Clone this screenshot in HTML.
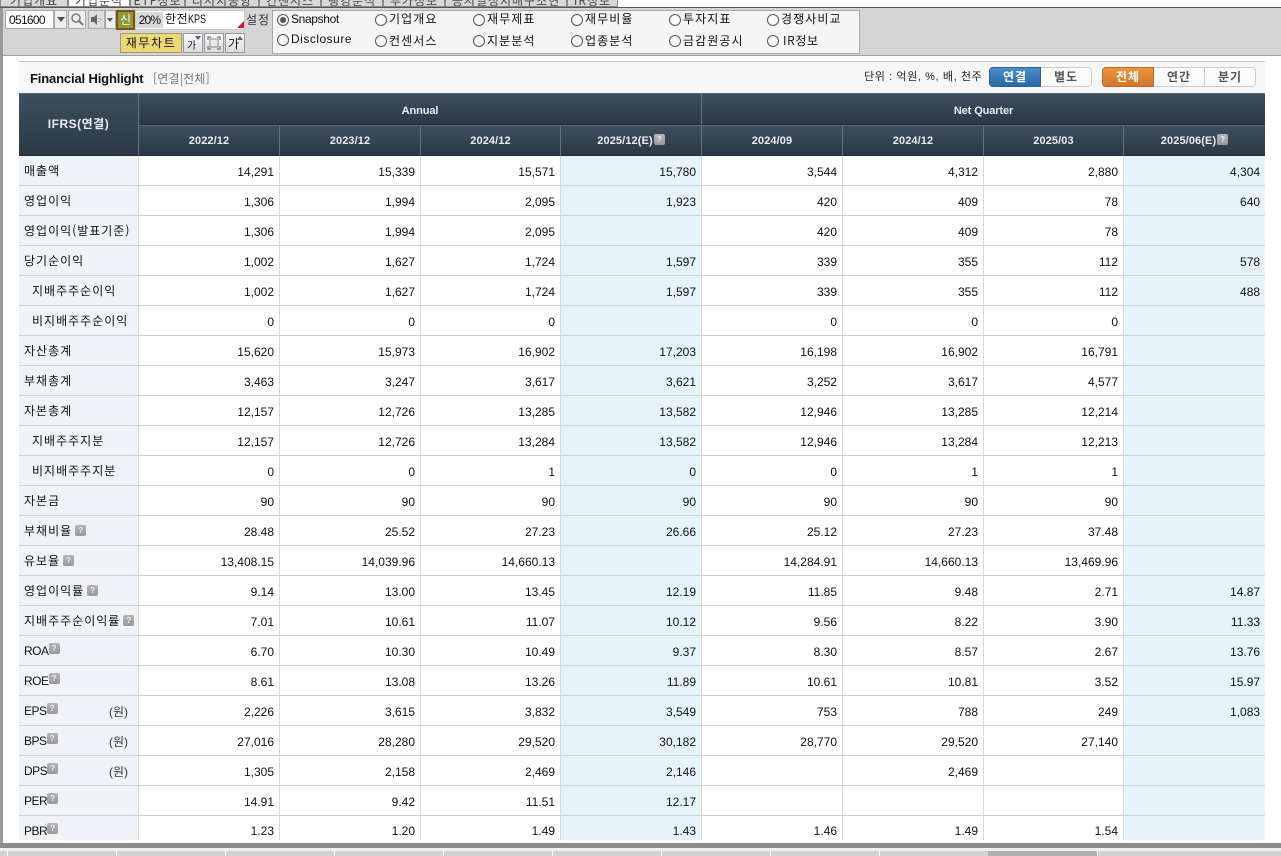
<!DOCTYPE html>
<html lang="ko"><head><meta charset="utf-8"><title>Financial Highlight</title>
<style>
html,body{margin:0;padding:0;background:#fff}
body{width:1281px;height:856px;position:relative;overflow:hidden;font-family:"Liberation Sans","Noto Sans CJK KR",sans-serif;font-size:12px;color:#111}
.a{position:absolute;white-space:nowrap}
.k{font-family:"Noto Sans CJK KR","Liberation Sans",sans-serif;letter-spacing:1px}
.tab{position:absolute;top:-8px;height:15px;line-height:15px;background:#d8d8d8;border:1px solid #888;box-sizing:border-box;text-align:center;font-size:12px;font-family:"Noto Sans CJK KR",sans-serif;overflow:hidden;letter-spacing:1px;color:#444}
.rd{position:absolute;width:12px;height:12px;border:1px solid #555;border-radius:50%;box-sizing:border-box;background:#f8f8f8}
.rt{position:absolute;font-family:"Noto Sans CJK KR",sans-serif;letter-spacing:1.1px;font-size:12px;line-height:14px;white-space:nowrap;color:#111}
.btn{position:absolute;top:33px;width:20px;height:20px;box-sizing:border-box;border:1px solid #999;background:linear-gradient(#fafafa,#ddd)}
table{position:absolute;left:19px;top:93px;border-collapse:separate;border-spacing:0;table-layout:fixed;width:1246px}
.wrap{position:absolute;left:0;top:0;width:1281px;height:840px;overflow:hidden}
th{background:linear-gradient(#3d4e5e,#2b3947);color:#e8edf2;font-size:11px;font-weight:bold;border-right:1px solid #65727f;border-bottom:1px solid #222d38;border-top:1px solid #5a6774;box-sizing:border-box;padding:0}
th.t{padding-top:3px;letter-spacing:-.1px}
th.r2{font-size:11px;font-weight:bold;letter-spacing:.1px}
td{height:30px;box-sizing:border-box;padding:2px 5px 0 0;border-right:1px solid #d8d8d8;border-bottom:1px solid #d0d0d0;text-align:right;font-size:12px;color:#111;background:#fff;white-space:nowrap}
td.l{background:#eff2f7;text-align:left;padding:0 0 1px 5px;font-family:"Noto Sans CJK KR","Liberation Sans",sans-serif;letter-spacing:1px;position:relative}
td.i{padding-left:13px}
td.e{background:#e5f4fa}
td.n{font-family:"Liberation Sans","Noto Sans CJK KR",sans-serif;letter-spacing:-.5px;padding-bottom:0}
td.n .q{margin-left:0;vertical-align:4px}
td.p{vertical-align:top;padding-top:8px}
tr td:last-child,tr th:last-child{border-right:0}
.q{display:inline-block;width:11px;height:11px;border-radius:2px;background:linear-gradient(#b4b4b4,#999);color:#eee;font:bold 8px/11px "Liberation Sans",sans-serif;text-align:center;letter-spacing:0;vertical-align:2px;margin-left:3px}
.u{position:absolute;right:10px;top:7px;letter-spacing:0;color:#333}
.seg{position:absolute;top:67px;height:20px;box-sizing:border-box;text-align:center;line-height:17px;font-size:12px;font-weight:bold;font-family:"Noto Sans CJK KR",sans-serif;letter-spacing:1px}
</style></head><body>
<div class="a" style="left:0;top:0;width:1281px;height:7px;background:#fff"></div>
<div class="tab" style="left:0;width:68px">기업개요</div>
<div class="tab" style="left:68px;width:62px;background:#fff">기업분석</div>
<div class="tab" style="left:130px;width:55px">ETF정보</div>
<div class="tab" style="left:185px;width:74px">리서치동향</div>
<div class="tab" style="left:259px;width:62px">컨센서스</div>
<div class="tab" style="left:321px;width:62px">랭킹분석</div>
<div class="tab" style="left:383px;width:62px">부가정보</div>
<div class="tab" style="left:445px;width:122px">증시일정지배구조현황</div>
<div class="tab" style="left:567px;width:51px">IR정보</div>
<div class="a" style="left:0;top:7px;width:1281px;height:1px;background:#555"></div>
<div class="a" style="left:0;top:8px;width:1281px;height:48px;background:#d5d5d5;border-bottom:1px solid #a0a0a0;box-sizing:border-box"></div>
<div class="a" style="left:0;top:8px;width:3px;height:835px;background:#999"></div>

<div class="a" style="left:5px;top:10px;width:49px;height:19px;background:#fff;border:1px solid #aaa;box-sizing:border-box;font-size:12px;line-height:18px;padding-left:3px;letter-spacing:-.7px">051600</div>
<div class="a" style="left:54px;top:10px;width:13px;height:19px;background:#eee;border:1px solid #aaa;box-sizing:border-box"><div style="position:absolute;left:2px;top:6px;border:4px solid transparent;border-top:5px solid #555;border-bottom:0"></div></div>
<div class="a" style="left:68px;top:10px;width:18px;height:19px;background:#eee;border:1px solid #aaa;box-sizing:border-box"><svg width="16" height="17" style="display:block"><circle cx="7" cy="7" r="4" fill="none" stroke="#777" stroke-width="1.5"/><path d="M10 10l4 4" stroke="#777" stroke-width="2"/></svg></div>
<div class="a" style="left:88px;top:10px;width:17px;height:19px;background:#ddd;border:1px solid #aaa;box-sizing:border-box"><svg width="15" height="17" style="display:block"><path d="M2 6h3l3-3v11l-3-3H2z" fill="#666"/><path d="M10 7v1M10 10v1M12 8v1" stroke="#666"/></svg></div>
<div class="a" style="left:105px;top:10px;width:11px;height:19px;background:#eee;border:1px solid #aaa;box-sizing:border-box"><div style="position:absolute;left:1px;top:7px;border:3px solid transparent;border-top:4px solid #555;border-bottom:0"></div></div>
<div class="a" style="left:116px;top:10px;width:19px;height:20px;background:#8a9a3c;border:2px solid #84500e;box-sizing:border-box;color:#fff;text-align:center;font:12px/15px 'Noto Sans CJK KR',sans-serif">신</div>
<div class="a" style="left:135px;top:10px;width:110px;height:20px;background:#fff;border:1px solid #ccc;box-sizing:border-box"></div>
<div class="a" style="left:136px;top:12px;width:27px;height:16px;background:#d8d8d8;font-size:12px;line-height:16px;text-align:center;letter-spacing:-.8px">20%</div>
<div class="a" style="left:165px;top:12px;line-height:15px;font-family:'Liberation Sans','Noto Sans CJK KR',sans-serif;font-size:12px;letter-spacing:.6px">한전<span style="display:inline-block;transform:scaleX(.75);transform-origin:left;letter-spacing:0">KPS</span></div>
<div class="a" style="left:237px;top:21px;width:0;height:0;border-left:7px solid transparent;border-bottom:7px solid #d8132a"></div>
<div class="a k" style="left:246px;top:12px;line-height:15px;color:#333;font-size:12px">설정</div>

<div class="a k" style="left:120px;top:33px;width:62px;height:20px;background:#ebd777;border:1px solid #9a9a7a;box-sizing:border-box;text-align:center;line-height:17px;font-size:12px;letter-spacing:1.6px">재무차트</div>
<div class="btn" style="left:183px"><span style="position:absolute;left:3px;top:4px;font:10px/14px 'Noto Sans CJK KR',sans-serif">가</span><div style="position:absolute;right:1px;top:2px;border:3px solid transparent;border-top:4px solid #3a67a8;border-bottom:0"></div></div>
<div class="btn" style="left:204px"><svg width="18" height="18" style="display:block"><path d="M3 6V3h3M12 3h3v3M15 12v3h-3M6 15H3v-3" fill="none" stroke="#555"/><rect x="5" y="5" width="8" height="8" fill="none" stroke="#888"/></svg></div>
<div class="btn" style="left:225px"><span style="position:absolute;left:2px;top:2px;font:12px/15px 'Noto Sans CJK KR',sans-serif">가</span><div style="position:absolute;right:1px;top:2px;border:3px solid transparent;border-bottom:4px solid #3a67a8;border-top:0"></div></div>

<div class="a" style="left:272px;top:10px;width:588px;height:44px;background:#f5f5f5;border:1px solid #a8a8a8;box-sizing:border-box"></div>
<div class="rd" style="left:277px;top:14px"><div style="position:absolute;left:2px;top:2px;width:6px;height:6px;border-radius:50%;background:#555"></div></div>
<div class="rt" style="left:291px;top:12px;font-family:'Liberation Sans',sans-serif;letter-spacing:-.35px">Snapshot</div>
<div class="rd" style="left:277px;top:34px"></div>
<div class="rt" style="left:291px;top:32px;font-family:'Liberation Sans',sans-serif;letter-spacing:.5px">Disclosure</div>
<div class="rd" style="left:375px;top:14px"></div><div class="rt" style="left:389px;top:12px">기업개요</div>
<div class="rd" style="left:375px;top:35px"></div><div class="rt" style="left:389px;top:34px">컨센서스</div>
<div class="rd" style="left:473px;top:14px"></div><div class="rt" style="left:487px;top:12px">재무제표</div>
<div class="rd" style="left:473px;top:35px"></div><div class="rt" style="left:487px;top:34px">지분분석</div>
<div class="rd" style="left:571px;top:14px"></div><div class="rt" style="left:585px;top:12px">재무비율</div>
<div class="rd" style="left:571px;top:35px"></div><div class="rt" style="left:585px;top:34px">업종분석</div>
<div class="rd" style="left:669px;top:14px"></div><div class="rt" style="left:683px;top:12px">투자지표</div>
<div class="rd" style="left:669px;top:35px"></div><div class="rt" style="left:683px;top:34px">금감원공시</div>
<div class="rd" style="left:767px;top:14px"></div><div class="rt" style="left:781px;top:12px">경쟁사비교</div>
<div class="rd" style="left:767px;top:35px"></div><div class="rt" style="left:783px;top:34px;letter-spacing:.6px">IR정보</div>

<div class="a" style="left:19px;top:61px;width:1246px;height:32px;background:#f7f7f7;border-top:1px solid #c4c4c4;box-sizing:border-box"></div>
<div class="a" style="left:30px;top:71px;font-size:13px;font-weight:bold;line-height:15px;color:#111;letter-spacing:-.15px">Financial Highlight</div>
<div class="a" style="left:153px;top:71px;line-height:15px;color:#777;font-size:12px;font-family:'Noto Sans CJK KR',sans-serif;letter-spacing:.2px">[연결|전체]</div>
<div class="a" style="left:864px;top:70px;line-height:15px;font-size:11px;color:#222;font-family:'Liberation Sans','Noto Sans CJK KR',sans-serif;letter-spacing:.6px">단위 : 억원, %, 배, 천주</div>
<div class="seg" style="left:989px;width:52px;background:linear-gradient(#4c8cc8,#2b6aa6);color:#fff;border:1px solid #2a6298;border-radius:4px 0 0 4px">연결</div>
<div class="seg" style="left:1041px;width:51px;background:#fbfbfb;color:#555;border:1px solid #ccc;border-left:0;border-radius:0 4px 4px 0">별도</div>
<div class="seg" style="left:1102px;width:52px;background:linear-gradient(#ec9440,#d2772a);color:#fff;border:1px solid #c06c20;border-radius:4px 0 0 4px">전체</div>
<div class="seg" style="left:1154px;width:51px;background:#fbfbfb;color:#555;border:1px solid #ccc;border-left:0">연간</div>
<div class="seg" style="left:1205px;width:51px;background:#fbfbfb;color:#555;border:1px solid #ccc;border-left:0;border-radius:0 4px 4px 0">분기</div>

<div class="wrap">
<table>
<colgroup><col style="width:120px"><col style="width:141px"><col style="width:141px"><col style="width:140px"><col style="width:141px"><col style="width:141px"><col style="width:141px"><col style="width:140px"><col style="width:141px"></colgroup>
<tr style="height:32px"><th rowspan="2" style="font-size:12px;letter-spacing:.5px;padding-bottom:2px;font-family:'Liberation Sans','Noto Sans CJK KR',sans-serif">IFRS(연결)</th><th class="t" colspan="4" style="height:32px">Annual</th><th class="t" colspan="4" style="height:32px">Net Quarter</th></tr>
<tr style="height:31px"><th class="r2" style="height:31px">2022/12</th><th class="r2">2023/12</th><th class="r2">2024/12</th><th class="r2">2025/12(E)<span class="q" style="margin-left:1px">?</span></th><th class="r2">2024/09</th><th class="r2">2024/12</th><th class="r2">2025/03</th><th class="r2">2025/06(E)<span class="q" style="margin-left:1px">?</span></th></tr>
<tr><td class="l">매출액</td><td>14,291</td><td>15,339</td><td>15,571</td><td class="e">15,780</td><td>3,544</td><td>4,312</td><td>2,880</td><td class="e">4,304</td></tr>
<tr><td class="l">영업이익</td><td>1,306</td><td>1,994</td><td>2,095</td><td class="e">1,923</td><td>420</td><td>409</td><td>78</td><td class="e">640</td></tr>
<tr><td class="l">영업이익(발표기준)</td><td>1,306</td><td>1,994</td><td>2,095</td><td class="e"></td><td>420</td><td>409</td><td>78</td><td class="e"></td></tr>
<tr><td class="l">당기순이익</td><td>1,002</td><td>1,627</td><td>1,724</td><td class="e">1,597</td><td>339</td><td>355</td><td>112</td><td class="e">578</td></tr>
<tr><td class="l i">지배주주순이익</td><td>1,002</td><td>1,627</td><td>1,724</td><td class="e">1,597</td><td>339</td><td>355</td><td>112</td><td class="e">488</td></tr>
<tr><td class="l i">비지배주주순이익</td><td>0</td><td>0</td><td>0</td><td class="e"></td><td>0</td><td>0</td><td>0</td><td class="e"></td></tr>
<tr><td class="l">자산총계</td><td>15,620</td><td>15,973</td><td>16,902</td><td class="e">17,203</td><td>16,198</td><td>16,902</td><td>16,791</td><td class="e"></td></tr>
<tr><td class="l">부채총계</td><td>3,463</td><td>3,247</td><td>3,617</td><td class="e">3,621</td><td>3,252</td><td>3,617</td><td>4,577</td><td class="e"></td></tr>
<tr><td class="l">자본총계</td><td>12,157</td><td>12,726</td><td>13,285</td><td class="e">13,582</td><td>12,946</td><td>13,285</td><td>12,214</td><td class="e"></td></tr>
<tr><td class="l i">지배주주지분</td><td>12,157</td><td>12,726</td><td>13,284</td><td class="e">13,582</td><td>12,946</td><td>13,284</td><td>12,213</td><td class="e"></td></tr>
<tr><td class="l i">비지배주주지분</td><td>0</td><td>0</td><td>1</td><td class="e">0</td><td>0</td><td>1</td><td>1</td><td class="e"></td></tr>
<tr><td class="l">자본금</td><td>90</td><td>90</td><td>90</td><td class="e">90</td><td>90</td><td>90</td><td>90</td><td class="e"></td></tr>
<tr><td class="l">부채비율<span class="q">?</span></td><td>28.48</td><td>25.52</td><td>27.23</td><td class="e">26.66</td><td>25.12</td><td>27.23</td><td>37.48</td><td class="e"></td></tr>
<tr><td class="l">유보율<span class="q">?</span></td><td>13,408.15</td><td>14,039.96</td><td>14,660.13</td><td class="e"></td><td>14,284.91</td><td>14,660.13</td><td>13,469.96</td><td class="e"></td></tr>
<tr><td class="l">영업이익률<span class="q">?</span></td><td>9.14</td><td>13.00</td><td>13.45</td><td class="e">12.19</td><td>11.85</td><td>9.48</td><td>2.71</td><td class="e">14.87</td></tr>
<tr><td class="l">지배주주순이익률<span class="q">?</span></td><td>7.01</td><td>10.61</td><td>11.07</td><td class="e">10.12</td><td>9.56</td><td>8.22</td><td>3.90</td><td class="e">11.33</td></tr>
<tr><td class="l n">ROA<span class="q">?</span></td><td>6.70</td><td>10.30</td><td>10.49</td><td class="e">9.37</td><td>8.30</td><td>8.57</td><td>2.67</td><td class="e">13.76</td></tr>
<tr><td class="l n">ROE<span class="q">?</span></td><td>8.61</td><td>13.08</td><td>13.26</td><td class="e">11.89</td><td>10.61</td><td>10.81</td><td>3.52</td><td class="e">15.97</td></tr>
<tr><td class="l n">EPS<span class="q">?</span><span class="u">(원)</span></td><td>2,226</td><td>3,615</td><td>3,832</td><td class="e">3,549</td><td>753</td><td>788</td><td>249</td><td class="e">1,083</td></tr>
<tr><td class="l n">BPS<span class="q">?</span><span class="u">(원)</span></td><td>27,016</td><td>28,280</td><td>29,520</td><td class="e">30,182</td><td>28,770</td><td>29,520</td><td>27,140</td><td class="e"></td></tr>
<tr><td class="l n">DPS<span class="q">?</span><span class="u">(원)</span></td><td>1,305</td><td>2,158</td><td>2,469</td><td class="e">2,146</td><td></td><td>2,469</td><td></td><td class="e"></td></tr>
<tr><td class="l n">PER<span class="q">?</span></td><td>14.91</td><td>9.42</td><td>11.51</td><td class="e">12.17</td><td></td><td></td><td></td><td class="e"></td></tr>
<tr><td class="l n" style="vertical-align:top;padding-top:7px">PBR<span class="q">?</span></td><td class="p">1.23</td><td class="p">1.20</td><td class="p">1.49</td><td class="e p">1.43</td><td class="p">1.46</td><td class="p">1.49</td><td class="p">1.54</td><td class="e"></td></tr>
</table>
</div>

<div class="a" style="left:0;top:843px;width:1281px;height:5px;background:#8c8c8c"></div>
<div class="a" style="left:0;top:848px;width:1281px;height:3px;background:#f0f0f0"></div>
<div class="a" style="left:0;top:851px;width:1281px;height:5px;background:#d2d2d2"></div>
<div class="a" style="left:7px;top:851px;width:1px;height:5px;background:#fff"></div>
<div class="a" style="left:116px;top:851px;width:1px;height:5px;background:#fff"></div>
<div class="a" style="left:225px;top:851px;width:1px;height:5px;background:#fff"></div>
<div class="a" style="left:334px;top:851px;width:1px;height:5px;background:#fff"></div>
<div class="a" style="left:443px;top:851px;width:1px;height:5px;background:#fff"></div>
<div class="a" style="left:552px;top:851px;width:1px;height:5px;background:#fff"></div>
<div class="a" style="left:661px;top:851px;width:1px;height:5px;background:#fff"></div>
<div class="a" style="left:770px;top:851px;width:1px;height:5px;background:#fff"></div>
<div class="a" style="left:879px;top:851px;width:1px;height:5px;background:#fff"></div>
<div class="a" style="left:988px;top:851px;width:109px;height:5px;background:#b0b0b0"></div>
<div class="a" style="left:1097px;top:851px;width:1px;height:5px;background:#fff"></div>
</body></html>
